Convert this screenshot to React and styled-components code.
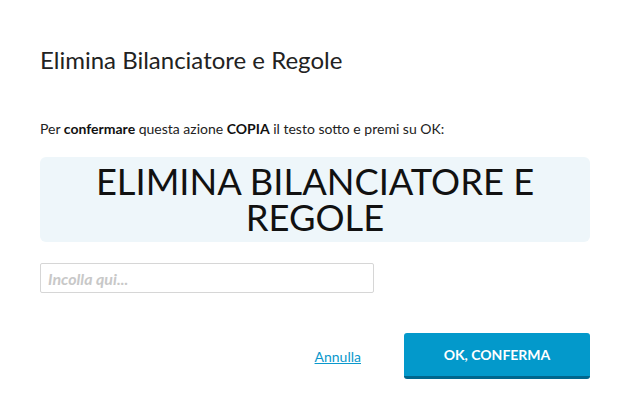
import React from "react";
import styled, { createGlobalStyle } from "styled-components";

const Global = createGlobalStyle`
  html, body { margin: 0; padding: 0; background: #fff; }
  body { font-family: Lato, "Open Sans", sans-serif; color: #222; }
  * { box-sizing: border-box; }
`;

const Dialog = styled.div`
  width: 630px;
  height: 417px;
  padding: 44px 40px 0 40px;
  display: flex;
  flex-direction: column;
`;

const Title = styled.h2`
  margin: 0;
  font-size: 24px;
  font-weight: 400;
  line-height: 32px;
  color: #222;
`;

const Instructions = styled.p`
  margin: 44px 0 0 0;
  font-size: 14px;
  line-height: 18px;
  color: #222;
  b { font-weight: 700; color: #111; }
`;

const Phrase = styled.div`
  margin-top: 19px;
  background: #eef6fa;
  border-radius: 6px;
  padding: 6px 20px 7px;
  text-align: center;
  font-size: 36.3px;
  line-height: 36px;
  color: #111;
  user-select: all;
`;

const PasteInput = styled.input`
  margin-top: 21px;
  width: 334px;
  height: 30px;
  border: 1px solid #d6d6d6;
  border-radius: 2px;
  padding: 0 7px;
  font-family: Lato, sans-serif;
  font-size: 16px;
  outline: none;
  &::placeholder { color: #c8c8c8; font-style: italic; font-weight: 700; }
`;

const Actions = styled.div`
  margin-top: 40px;
  display: flex;
  justify-content: flex-end;
  align-items: center;
  gap: 43px;
`;

const CancelLink = styled.a`
  font-size: 14px;
  color: #0a98cc;
  text-decoration: underline;
  cursor: pointer;
`;

const ConfirmButton = styled.button`
  width: 186px;
  height: 46px;
  border: none;
  border-bottom: 3px solid #00668d;
  border-radius: 3px;
  background: #0399cb;
  color: #fff;
  font-family: Lato, sans-serif;
  font-weight: 700;
  font-size: 14px;
  text-transform: uppercase;
  cursor: pointer;
`;

export default function App() {
  return (
    <>
      <Global />
      <Dialog>
        <Title>Elimina Bilanciatore e Regole</Title>
        <Instructions>
          Per <b>confermare</b> questa azione <b>COPIA</b> il testo sotto e premi su OK:
        </Instructions>
        <Phrase>ELIMINA BILANCIATORE E REGOLE</Phrase>
        <PasteInput placeholder="Incolla qui..." />
        <Actions>
          <CancelLink>Annulla</CancelLink>
          <ConfirmButton>OK, conferma</ConfirmButton>
        </Actions>
      </Dialog>
    </>
  );
}
